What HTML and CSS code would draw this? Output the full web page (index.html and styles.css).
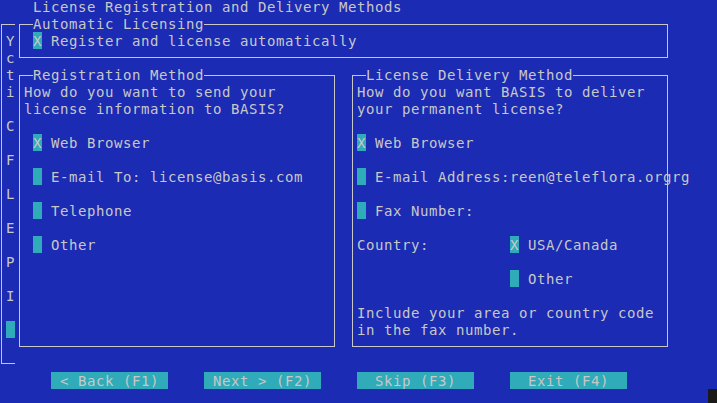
FILE: index.html
```html
<!DOCTYPE html>
<html lang="en">
<head>
<meta charset="utf-8">
<title>License Registration and Delivery Methods</title>
<link rel="stylesheet" href="styles.css">
</head>
<body>
<div class="screen">
  <div class="title">License Registration and Delivery Methods</div>

  <div class="frame side">
    <div class="line"></div>
    <div class="line c1">Y</div>
    <div class="line c1">c</div>
    <div class="line c1">t</div>
    <div class="line c1">i</div>
    <div class="line"></div>
    <div class="line c1">C</div>
    <div class="line"></div>
    <div class="line c1">F</div>
    <div class="line"></div>
    <div class="line c1">L</div>
    <div class="line"></div>
    <div class="line c1">E</div>
    <div class="line"></div>
    <div class="line c1">P</div>
    <div class="line"></div>
    <div class="line c1">I</div>
    <div class="line"></div>
    <div class="line c1"><span class="cb"></span></div>
  </div>

  <div class="frame auto">
    <div class="line c2"><span class="legend">Automatic Licensing</span></div>
    <div class="line c2"><span class="cb">X</span><span class="label">Register and license automatically</span></div>
  </div>

  <div class="frame reg">
    <div class="line c2"><span class="legend">Registration Method</span></div>
    <div class="line c1">How do you want to send your</div>
    <div class="line c1">license information to BASIS?</div>
    <div class="line"></div>
    <div class="line c2"><span class="cb">X</span><span class="label">Web Browser</span></div>
    <div class="line"></div>
    <div class="line c2"><span class="cb"></span><span class="label">E-mail To: license@basis.com</span></div>
    <div class="line"></div>
    <div class="line c2"><span class="cb"></span><span class="label">Telephone</span></div>
    <div class="line"></div>
    <div class="line c2"><span class="cb"></span><span class="label">Other</span></div>
  </div>

  <div class="frame deliv">
    <div class="line c2"><span class="legend">License Delivery Method</span></div>
    <div class="line c1">How do you want BASIS to deliver</div>
    <div class="line c1">your permanent license?</div>
    <div class="line"></div>
    <div class="line c1"><span class="cb">X</span><span class="label">Web Browser</span></div>
    <div class="line"></div>
    <div class="line c1"><span class="cb"></span><span class="label">E-mail Address:reen@teleflora.orgrg</span></div>
    <div class="line"></div>
    <div class="line c1"><span class="cb"></span><span class="label">Fax Number:</span></div>
    <div class="line"></div>
    <div class="line c1"><span class="country">Country:</span><span class="cb">X</span><span class="label">USA/Canada</span></div>
    <div class="line"></div>
    <div class="line c1"><span class="country"></span><span class="cb"></span><span class="label">Other</span></div>
    <div class="line"></div>
    <div class="line c1">Include your area or country code</div>
    <div class="line c1">in the fax number.</div>
  </div>

  <div class="buttons">
    <div class="btn">&lt; Back (F1)</div>
    <div class="btn">Next &gt; (F2)</div>
    <div class="btn">Skip (F3)</div>
    <div class="btn">Exit (F4)</div>
  </div>

  <div class="cursor"></div>
</div>
</body>
</html>
```
FILE: styles.css
```css
html, body {
  margin: 0;
  padding: 0;
  width: 717px;
  height: 403px;
  overflow: hidden;
  background: #1b2bb4;
}

.screen {
  display: grid;
  grid-template-columns: repeat(80, 9px);
  grid-template-rows: repeat(24, 17px);
  margin-left: -3px;
  margin-top: -2px;
  font-family: "DejaVu Sans Mono", "Liberation Mono", monospace;
  font-size: 14px;
  letter-spacing: 0.57px;
  line-height: 19px;
  color: #c8c8c8;
  white-space: pre;
}

.title {
  grid-column: 5 / span 45;
  grid-row: 1;
}

.frame {
  position: relative;
  display: flex;
  flex-direction: column;
}

.frame::before {
  content: "";
  position: absolute;
  top: 9px;
  left: 4px;
  right: 4px;
  bottom: 8px;
  border: 1px solid #c8c8c8;
}

.side {
  grid-column: 1 / 3;
  grid-row: 2 / 23;
}

.side::before {
  right: 0;
  border-right: none;
}

.auto {
  grid-column: 3 / 76;
  grid-row: 2 / 5;
}

.reg {
  grid-column: 3 / 39;
  grid-row: 5 / 22;
}

.deliv {
  grid-column: 40 / 76;
  grid-row: 5 / 22;
}

.line {
  height: 17px;
  display: flex;
  flex-shrink: 0;
}

.c1 { padding-left: 9px; }
.c2 { padding-left: 18px; }

.legend {
  position: relative;
  height: 17px;
  background: #1b2bb4;
}

.cb {
  display: inline-block;
  width: 9px;
  height: 17px;
  background: #2fabb9;
  flex-shrink: 0;
}

.label {
  margin-left: 9px;
}

.country {
  display: inline-block;
  width: 153px;
  flex-shrink: 0;
}

.buttons {
  grid-column: 7 / span 64;
  grid-row: 23;
  display: flex;
  gap: 36px;
}

.btn {
  width: 117px;
  height: 17px;
  background: #2fabb9;
  text-align: center;
  overflow: hidden;
}

.cursor {
  grid-column: 80;
  grid-row: 24;
  background: #1a1a1a;
}
```
